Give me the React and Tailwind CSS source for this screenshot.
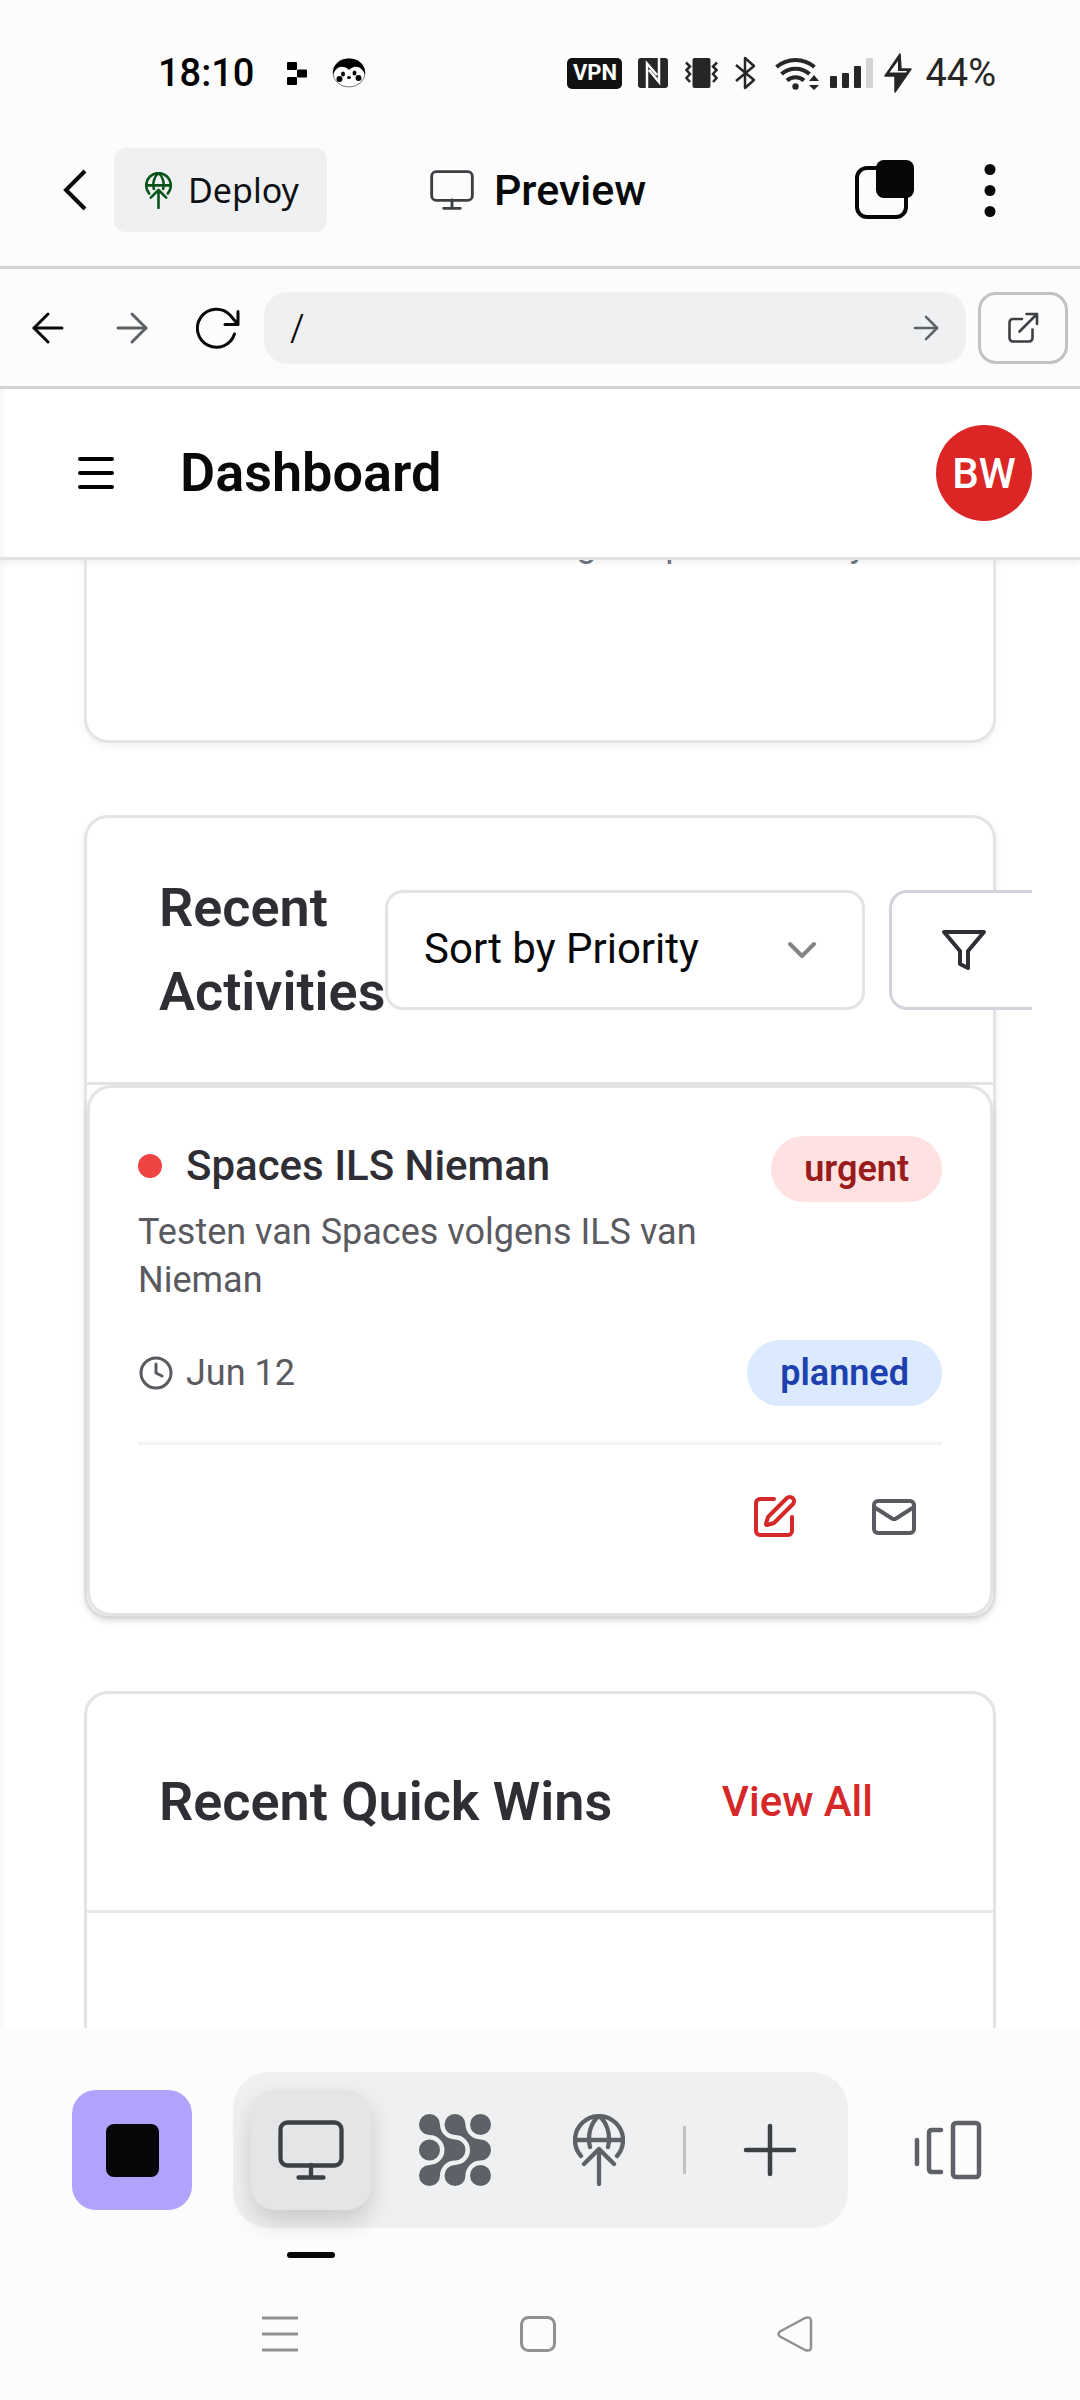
import { ArrowLeft, ArrowRight, ChevronDown, Clock, Mail, Menu, SquarePen } from "lucide-react";

function MonitorIcon({ className }) {
  return (
    <svg className={className} viewBox="0 0 66 60" fill="none" stroke="currentColor" strokeWidth="4.300" strokeLinecap="round">
      <rect x="2.500" y="2.500" width="61" height="43" rx="7" />
      <path d="M33 45v12.500M20.500 57.500h25" />
    </svg>
  );
}

function GlobeUpIcon({ className, stroke }) {
  return (
    <svg className={className} viewBox="0 0 52 72" fill="none" stroke="currentColor" strokeWidth={stroke} strokeLinecap="round" strokeLinejoin="round">
      <path d="M8 42A24 24 0 1 1 44 42" />
      <path d="M2 26H50" />
      <path d="M17 33C14 21 18 8 26 2C34 8 38 21 35 33" />
      <path d="M11 50L26 35L41 50M26 35V70" />
    </svg>
  );
}

function BlobIcon({ className }) {
  return (
    <svg className={className} viewBox="0 0 72 72" fill="currentColor">
      <path d="M21 10.5A15 15 0 0 0 36 25.5A10.5 10.5 0 0 1 36 46.5A15 15 0 0 0 21 61.5A10.5 10.5 0 1 1 10.5 51A15 15 0 0 0 10.5 21A10.5 10.5 0 1 1 21 10.5Z" />
      <path d="M46.5 10.5A15 15 0 0 0 61.5 25.5A10.5 10.5 0 0 1 61.5 46.5A15 15 0 0 0 46.5 61.5A10.5 10.5 0 1 1 36 51A15 15 0 0 0 36 21A10.5 10.5 0 1 1 46.5 10.5Z" />
      <circle cx="10.5" cy="36" r="10.5" />
      <circle cx="61.5" cy="10.5" r="10.5" />
      <circle cx="61.5" cy="61.5" r="10.5" />
    </svg>
  );
}

function StatusBar() {
  return (
    <div className="flex h-[124px] items-start justify-between pt-[51px] pr-[84px] pl-[158px] text-[38px] leading-[44px]">
      <div className="flex items-center">
        <span className="font-medium text-black">18:10</span>
        <svg className="ml-[33px] h-[24px] w-[20px]" viewBox="0 0 20 24" fill="#000">
          <rect x="0" y="1" width="10" height="8" rx="1" />
          <rect x="10" y="8.500" width="10" height="8" rx="1" />
          <rect x="0" y="16" width="10" height="8" rx="1" />
        </svg>
        <svg className="ml-[25px] h-[30px] w-[34px]" viewBox="0 0 34 30">
          <ellipse cx="17" cy="15" rx="16" ry="14" fill="#fff" stroke="#777" />
          <path d="M1 17C0 6 8 .5 17 .5S34 6 33 17C31 11 27 8 22 9C19 10 18 11 17 12C16 11 14 9 11 9C6 8 3 12 1 17Z" fill="#000" />
          <circle cx="7.500" cy="21" r="3" />
          <circle cx="26.500" cy="20" r="3" />
          <ellipse cx="11" cy="16" rx="2" ry="2.500" />
          <ellipse cx="22.500" cy="15" rx="2" ry="2.500" />
          <ellipse cx="17" cy="19.500" rx="2" ry="1.500" />
        </svg>
      </div>
      <div className="flex items-center text-[#262626]">
        <span className="flex h-[31px] w-[55px] items-center justify-center rounded-[5px] bg-[#111] text-[22px] leading-none font-bold text-white">VPN</span>
        <svg className="ml-[16px] h-[30px] w-[30px]" viewBox="0 0 30 30">
          <rect width="30" height="30" rx="3" fill="currentColor" />
          <path d="M9 30V5.500L19 17M11 12L21 24V0" fill="none" stroke="#fcfcfc" strokeWidth="2.500" />
        </svg>
        <svg className="ml-[17px] h-[30px] w-[33px]" viewBox="0 0 33 30" fill="none" stroke="currentColor" strokeWidth="2.500">
          <rect x="7.500" width="18" height="30" rx="2" fill="currentColor" stroke="none" />
          <path d="M1 4.500L5 8.500L1.500 12L5 16L1.500 20L5 24M32 4.500L28 8.500L31.500 12L28 16L31.500 20L28 24" />
        </svg>
        <svg className="ml-[17px] h-[34px] w-[21px]" viewBox="0 0 21 34" fill="none" stroke="currentColor" strokeWidth="2.500" strokeLinejoin="round">
          <path d="M1 9L19 24L10 32V2L19 10L1 25" />
        </svg>
        <svg className="ml-[19px] h-[36px] w-[44px]" viewBox="0 0 44 36" fill="none" stroke="currentColor" strokeWidth="4">
          <path d="M1.500 12A29 29 0 0 1 39.500 12M6.500 19A21 21 0 0 1 34.500 19M12 25.500A13 13 0 0 1 29 25.500" />
          <circle cx="20.500" cy="31.500" r="3.200" fill="currentColor" stroke="none" />
          <path d="M34 26L39 20L44 26ZM34 30L39 35L44 30Z" fill="currentColor" stroke="none" />
        </svg>
        <svg className="ml-[11px] h-[30px] w-[43px]" viewBox="0 0 43 30" fill="currentColor">
          <rect y="18" width="7" height="12" rx="1" />
          <rect x="12" y="15" width="7" height="15" rx="1" />
          <rect x="24" y="8" width="7" height="22" rx="1" />
          <rect x="36" width="7" height="30" rx="1" fill="#d4d4d4" />
        </svg>
        <svg className="ml-[11px] h-[40px] w-[28px]" viewBox="0 0 28 40">
          <path d="M16 1L1 23H11V39L27 16H17Z" fill="currentColor" stroke="currentColor" strokeWidth="1.500" strokeLinejoin="round" />
          <path d="M14 8L5.500 19.500H22L23 18H14Z" fill="#fcfcfc" />
        </svg>
        <span className="ml-[13px]">44%</span>
      </div>
    </div>
  );
}

function AppBar() {
  return (
    <div className="flex items-center border-b-[3px] border-[#d1d3d5] pt-[24px] pr-[72px] pb-[34px] pl-[56px]">
      <button aria-label="Back" className="flex h-[84px] w-[38px] items-center justify-center">
        <svg className="h-[42px] w-[26px]" viewBox="0 0 26 42" fill="none" stroke="#08090b" strokeWidth="4">
          <path d="M23 2L4 21L23 40" />
        </svg>
      </button>
      <button className="ml-[20px] flex h-[84px] items-center gap-[16px] rounded-[12px] bg-[#eff0f2] pr-[28px] pl-[31px] font-['Noto_Sans',sans-serif] text-[34px] text-[#0e1013]">
        <GlobeUpIcon className="h-[37px] w-[27px] text-[#0a5318]" stroke="5" />
        Deploy
      </button>
      <div className="ml-[103px] flex items-center gap-[20px] text-[43px] font-medium text-[#08090b]">
        <MonitorIcon className="h-[40px] w-[44px] text-[#3c3f44]" />
        <h1>Preview</h1>
      </div>
      <button aria-label="Windows" className="ml-auto">
        <svg className="h-[60px] w-[60px]" viewBox="0 0 60 60">
          <rect x="2" y="8" width="49" height="49" rx="10" fill="none" stroke="#060708" strokeWidth="4" />
          <rect x="21" y="0" width="38" height="38" rx="8" fill="#060708" />
        </svg>
      </button>
      <button aria-label="More" className="ml-[57px] flex h-[60px] w-[36px] items-center justify-center">
        <svg className="h-[53px] w-[12px]" viewBox="0 0 12 53" fill="#060708">
          <circle cx="6" cy="5.500" r="5.500" />
          <circle cx="6" cy="26.500" r="5.500" />
          <circle cx="6" cy="47.500" r="5.500" />
        </svg>
      </button>
    </div>
  );
}

function AddressBar() {
  return (
    <div className="flex items-center gap-[12px] border-b-[3px] border-[#d3d3d3] pt-[23px] pr-[12px] pb-[22px] pl-[24px]">
      <div className="flex flex-none items-center text-[#08090b]">
        <button aria-label="Go back" className="flex h-[72px] w-[48px] items-center justify-center">
          <ArrowLeft className="h-[52px] w-[52px] [stroke-width:1.5]" />
        </button>
        <button aria-label="Go forward" className="ml-[36px] flex h-[72px] w-[48px] items-center justify-center text-[#5f6168]">
          <ArrowRight className="h-[52px] w-[52px] [stroke-width:1.5]" />
        </button>
        <button aria-label="Reload" className="ml-[36px] flex h-[72px] w-[60px] items-center justify-center">
          <svg className="ml-[-8px] h-[42px] w-[44px]" viewBox="0 0 44 42" fill="none" stroke="currentColor" strokeWidth="3" strokeLinecap="round" strokeLinejoin="round">
            <path d="M38.500 27A19 19 0 1 1 34 8L42 17.500M42 4.500V17.500H29" />
          </svg>
        </button>
      </div>
      <div className="flex h-[72px] min-w-0 flex-1 items-center rounded-[24px] bg-[#eff0f2] pr-[21px] pl-[26px]">
        <input aria-label="Path" defaultValue="/" className="min-w-0 flex-1 bg-transparent font-['Noto_Sans',sans-serif] text-[40px] leading-[48px] font-light text-[#08090b] outline-none" />
        <button aria-label="Go" className="text-[#5f6168]">
          <ArrowRight className="h-[38px] w-[38px] [stroke-width:1.6]" />
        </button>
      </div>
      <button aria-label="Open in new tab" className="flex h-[72px] w-[90px] flex-none items-center justify-center rounded-[18px] border-[3px] border-[#c0c3c4] text-[#3c3f44]">
        <svg className="h-[32px] w-[32px]" viewBox="0 0 32 32" fill="none" stroke="currentColor" strokeWidth="2.600" strokeLinecap="round" strokeLinejoin="round">
          <path d="M15 7H6A3.500 3.500 0 0 0 2.500 10.500V26A3.500 3.500 0 0 0 6 29.500H22A3.500 3.500 0 0 0 25.500 26V17.500" />
          <path d="M12.500 19.500L30 2M19.500 2H30V12" />
        </svg>
      </button>
    </div>
  );
}

function ActivityItem() {
  return (
    <article className="rounded-[24px] border-[3px] border-[#e4e4e7] bg-white p-[48px] shadow-[0_3px_6px_rgba(0,0,0,0.08)]">
      <div className="flex items-start justify-between">
        <div className="max-w-[600px]">
          <div className="flex items-center gap-[24px]">
            <span className="h-[24px] w-[24px] rounded-full bg-[#ef4444]" />
            <h3 className="text-[42px] leading-[60px] font-medium text-[#2f2e35]">Spaces ILS Nieman</h3>
          </div>
          <p className="mt-[12px] text-[36px] leading-[48px] text-[#5a5a61]">Testen van Spaces volgens ILS van Nieman</p>
        </div>
        <span className="rounded-full bg-[#fee2e2] px-[33px] py-[9px] text-[36px] leading-[48px] font-semibold text-[#991b1b]">urgent</span>
      </div>
      <div className="mt-[36px] flex items-center justify-between">
        <div className="flex items-center gap-[12px] text-[36px] leading-[48px] text-[#5a5a61]">
          <Clock className="h-[36px] w-[36px]" />
          <time>Jun 12</time>
        </div>
        <span className="rounded-full bg-[#dbeafe] px-[33px] py-[9px] text-[36px] leading-[48px] font-semibold text-[#1e40af]">planned</span>
      </div>
      <div className="mt-[36px] flex justify-end gap-[24px] border-t-[3px] border-[#f3f4f6] pt-[24px]">
        <button aria-label="Edit" className="p-[24px] text-[#d62828]">
          <SquarePen className="h-[48px] w-[48px]" />
        </button>
        <button aria-label="Mail" className="p-[24px] text-[#5a5a61]">
          <Mail className="h-[48px] w-[48px]" />
        </button>
      </div>
    </article>
  );
}

function Dashboard() {
  return (
    <section className="flex min-h-0 flex-1 flex-col overflow-hidden bg-white shadow-[inset_6px_0_6px_-4px_rgba(0,0,0,0.05)]">
      <header className="flex h-[171px] flex-none items-center border-b-[3px] border-[#e4e4e4] pr-[48px] pl-[72px] shadow-[0_3px_6px_rgba(0,0,0,0.06)]">
        <button aria-label="Menu">
          <Menu className="h-[48px] w-[48px]" />
        </button>
        <h2 className="ml-[60px] text-[54px] leading-[84px] font-semibold text-[#08090b]">Dashboard</h2>
        <span className="ml-auto flex h-[96px] w-[96px] items-center justify-center rounded-full bg-[#dc2626] text-[42px] font-medium text-white">BW</span>
      </header>
      <main className="mr-[48px] flex min-h-0 flex-1 flex-col gap-[72px] overflow-hidden pr-[36px] pl-[84px]">
        <div className="-mt-[43px] flex-none rounded-[24px] border-[3px] border-[#e4e4e7] pb-[172px] shadow-[0_3px_6px_rgba(0,0,0,0.06)]">
          <p className="text-center text-[36px] leading-[48px] text-[#6b7280]">No new activities during the previous day</p>
        </div>
        <div className="flex-none rounded-[24px] border-[3px] border-[#e4e4e7] shadow-[0_3px_6px_rgba(0,0,0,0.08)]">
          <div className="flex items-center border-b-[3px] border-[#e4e4e7] px-[72px] py-[48px]">
            <h3 className="w-[226px] flex-none text-[54px] leading-[84px] font-semibold text-[#2f2e35]">Recent Activities</h3>
            <div className="flex flex-none gap-[24px]">
              <div className="relative">
                <select aria-label="Sort" className="h-[120px] w-[480px] appearance-none rounded-[18px] border-[3px] border-[#e4e4e4] bg-white px-[36px] pb-[3px] text-[42px] text-[#08090b]">
                  <option>Sort by Priority</option>
                </select>
                <ChevronDown className="pointer-events-none absolute top-[36px] right-[39px] h-[48px] w-[48px] text-[#848484]" />
              </div>
              <button aria-label="Filter" className="flex h-[120px] w-[200px] items-center rounded-[18px] border-[3px] border-[#d1d5db] bg-white pl-[48px] text-[#2f2e35]">
                <svg className="h-[48px] w-[48px]" viewBox="0 0 24 24" fill="none" stroke="currentColor" strokeWidth="2" strokeLinecap="round" strokeLinejoin="round">
                  <path d="M22 3H2L10 12.460V19L14 21V12.460Z" />
                </svg>
              </button>
            </div>
          </div>
          <ActivityItem />
        </div>
        <div className="min-h-[400px] flex-none rounded-[24px] border-[3px] border-[#e4e4e7]">
          <div className="flex items-center justify-between border-b-[3px] border-[#e5e7eb] px-[72px] py-[48px]">
            <h3 className="text-[54px] leading-[84px] font-semibold text-[#2f2e35]">Recent Quick Wins</h3>
            <a href="#wins" className="px-[48px] py-[30px] text-[42px] leading-[60px] font-medium text-[#d62828]">View All</a>
          </div>
        </div>
      </main>
    </section>
  );
}

function BottomBar() {
  const slot = "flex h-[120px] w-[120px] flex-none items-center justify-center";
  return (
    <nav className="flex flex-none flex-col pt-[44px]">
      <div className="flex items-center justify-between px-[72px]">
        <button aria-label="Stop" className="flex h-[120px] w-[120px] items-center justify-center rounded-[24px] bg-[#b1a3fd]">
          <span className="h-[53px] w-[53px] rounded-[8px] bg-[#060708]" />
        </button>
        <div className="flex items-center gap-[24px] rounded-[36px] bg-[#eff0f2] p-[18px] text-[#5f6168]">
          <button aria-label="Preview" className="relative flex h-[120px] w-[120px] items-center justify-center rounded-[24px] bg-[#e4e5e7] text-[#3c3f44] shadow-[0_12px_24px_rgba(0,0,0,0.16)]">
            <MonitorIcon className="h-[60px] w-[66px]" />
            <span className="absolute top-[162px] left-[36px] h-[6px] w-[48px] rounded-full bg-[#060708]" />
          </button>
          <button aria-label="Agent" className={slot}>
            <BlobIcon className="h-[72px] w-[72px]" />
          </button>
          <button aria-label="Deployments" className={slot}>
            <GlobeUpIcon className="h-[72px] w-[52px]" stroke="4.300" />
          </button>
          <span className="h-[48px] w-[3px] bg-[#c0c2c4]" />
          <button aria-label="New tab" className={slot}>
            <svg className="h-[54px] w-[54px]" viewBox="0 0 54 54" stroke="#3c3f44" strokeWidth="4.500" strokeLinecap="round">
              <path d="M27 3V51M3 27H51" />
            </svg>
          </button>
        </div>
        <button aria-label="Tabs" className={slot}>
          <svg className="h-[60px] w-[68px]" viewBox="0 0 68 60" fill="none" stroke="#5f6168" strokeWidth="4.500" strokeLinecap="round" strokeLinejoin="round">
            <path d="M3 20V44M27 10H18Q15 10 15 13V49Q15 52 18 52H27" />
            <rect x="39" y="3" width="26" height="54" rx="3" />
          </svg>
        </button>
      </div>
      <div className="flex justify-between pt-[88px] pr-[267px] pb-[48px] pl-[262px]">
        <button aria-label="Recents">
          <svg className="h-[36px] w-[36px]" viewBox="0 0 36 36" stroke="#919191" strokeWidth="3">
            <path d="M0 2H36M0 18H36M0 34H36" />
          </svg>
        </button>
        <button aria-label="Home">
          <svg className="h-[36px] w-[36px]" viewBox="0 0 36 36" fill="none" stroke="#919191" strokeWidth="3">
            <rect x="1.500" y="1.500" width="33" height="33" rx="7" />
          </svg>
        </button>
        <button aria-label="System back">
          <svg className="h-[36px] w-[36px]" viewBox="0 0 36 36" fill="none" stroke="#919191" strokeWidth="2.500" strokeLinejoin="round">
            <path d="M3 15.500L28 2Q34 0 34 5V31Q34 36 28 34L3 20.500Q0 18 3 15.500Z" />
          </svg>
        </button>
      </div>
    </nav>
  );
}

export default function App() {
  return (
    <div className="flex h-screen flex-col overflow-hidden bg-[#fcfcfc] font-[Roboto,sans-serif]">
      <StatusBar />
      <AppBar />
      <AddressBar />
      <Dashboard />
      <BottomBar />
    </div>
  );
}
